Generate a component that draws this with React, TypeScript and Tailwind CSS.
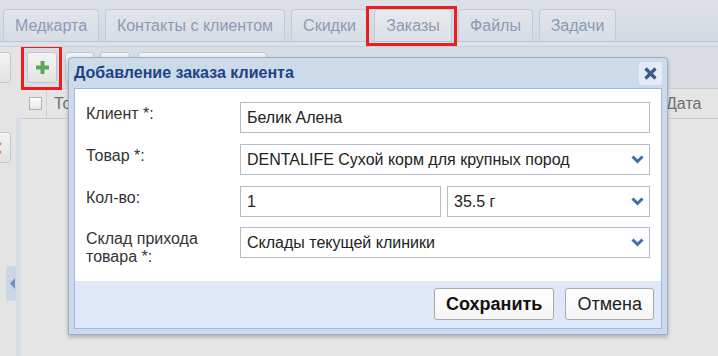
import React from "react";

const tabs = [
  { label: "Медкарта", w: "w-[96px]" },
  { label: "Контакты с клиентом", w: "w-[180px]" },
  { label: "Скидки", w: "w-[77px]" },
  { label: "Заказы", w: "w-[78px]", active: true },
  { label: "Файлы", w: "w-[75px]" },
  { label: "Задачи", w: "w-[77px]" },
];

const Chevron = () => (
  <svg width="13" height="9" viewBox="0 0 13 9" className="shrink-0">
    <path d="M1.5 1.5 L6.5 6.5 L11.5 1.5" fill="none" stroke="#3f6cae" strokeWidth="3" />
  </svg>
);

type FieldProps = { value: string; select?: boolean; className?: string };

const Field = ({ value, select, className }: FieldProps) => (
  <div
    className={
      "flex h-[31px] items-center border border-[#b5bccb] bg-white pl-[6px] pr-[5px] text-[16px] text-[#222] " +
      (className ?? "")
    }
  >
    <span className="flex-1 truncate">{value}</span>
    {select && <Chevron />}
  </div>
);

const Row = ({ label, children }: { label: React.ReactNode; children: React.ReactNode }) => (
  <div className="flex">
    <div className="w-[154px] pt-[3px] text-[16px] leading-[18px] text-[#333]">{label}</div>
    <div className="flex flex-1 gap-[6px]">{children}</div>
  </div>
);

const ToolButton = ({ className, children }: { className?: string; children?: React.ReactNode }) => (
  <div
    className={
      "flex h-[31px] items-center justify-center rounded-[3px] border border-[#c3c7cd] bg-gradient-to-b from-[#f3f3f3] to-[#e3e3e3] " +
      (className ?? "")
    }
  >
    {children}
  </div>
);

export default function App() {
  return (
    <div className="relative h-[356px] w-[718px] overflow-hidden bg-[#e4e4e4] font-['Liberation_Sans',Arial,sans-serif]">
      {/* tabs */}
      <div className="flex h-[42px] items-end gap-[6px] border-b border-[#b4c4da] bg-gradient-to-b from-[#dde1e7] to-[#d4d9e0] pl-[3px]">
        {tabs.map((t) => (
          <div
            key={t.label}
            className={
              "relative flex h-[32px] items-center justify-center rounded-t-[4px] border border-b-0 border-[#bccbdf] text-[16px] text-[#8c9bb4] " +
              t.w +
              (t.active
                ? " bg-gradient-to-b from-[#e7eaef] to-[#dde1e7]"
                : " bg-gradient-to-b from-[#e1e5eb] to-[#d8dde4]")
            }
          >
            {t.label}
            {t.active && (
              <div className="absolute -bottom-[5px] -left-[9px] -right-[6px] -top-[4px] z-10 border-[3px] border-[#ee1c1c]" />
            )}
          </div>
        ))}
      </div>
      <div className="h-[5px] border-b border-[#c6cfdc] bg-[#dde2e9]" />

      <div className="flex h-[309px]">
        {/* left panel */}
        <div className="flex w-[16px] flex-col overflow-hidden">
          <ToolButton className="-ml-[20px] mt-[5px] w-[31px] shrink-0" />
          <ToolButton className="-ml-[20px] mt-[49px] w-[31px] shrink-0">
            <svg width="14" height="14" viewBox="0 0 14 14">
              <path d="M2 2 L12 12 M12 2 L2 12" stroke="#e98a5e" strokeWidth="2.5" />
            </svg>
          </ToolButton>
        </div>
        <div className="flex w-[5px] flex-col">
          <div className="h-[71px]" />
          <div className="relative flex-1 bg-[#d6dde7]">
            <div className="absolute -left-[10px] top-[148px] flex h-[35px] w-[10px] items-center justify-end rounded-l-[4px] bg-[#ccd7e6] pr-[1px]">
              <svg width="5" height="11" viewBox="0 0 5 11">
                <path d="M5 0 L0 5.5 L5 11 Z" fill="#7290c0" />
              </svg>
            </div>
          </div>
        </div>

        {/* main */}
        <div className="flex flex-1 flex-col overflow-hidden">
          <div className="flex h-[41px] items-start gap-[8px] bg-[#d9dde3] pl-[6px] pt-[5px]">
            <div className="relative">
              <ToolButton className="w-[30px]">
                <svg width="13" height="13" viewBox="0 0 13 13">
                  <path d="M6.5 0 V13 M0 6.5 H13" stroke="#5aa95a" strokeWidth="4" />
                </svg>
              </ToolButton>
              <div className="absolute -bottom-[7px] -left-[6px] -right-[5px] -top-[7px] border-[3px] border-[#ee1c1c]" />
            </div>
            <ToolButton className="w-[29px]" />
            <ToolButton className="-ml-[2px] w-[30px]" />
            <ToolButton className="w-[129px]" />
          </div>
          <div className="flex h-[31px] items-stretch border-y border-[#c9cdd3] bg-[#e5e5e5] text-[16px] text-[#6e6e6e]">
            <div className="flex w-[26px] items-center border-r border-[#d2d2d2] pl-[8px]">
              <div className="h-[13px] w-[13px] border border-[#b2b2b2] bg-gradient-to-b from-white to-[#e6e6e6]" />
            </div>
            <div className="flex w-[40px] items-center overflow-hidden pl-[7px]">То</div>
            <div className="flex-1" />
            <div className="flex w-[54px] items-center border-l border-[#d2d2d2] pl-[1px]">Дата</div>
          </div>
          <div className="flex-1 bg-[#e5e5e5]" />
        </div>
      </div>

      {/* dialog */}
      <div className="absolute left-[68px] top-[57px] z-20 w-[600px] rounded-t-[4px] border border-[#9cb0cb] bg-[#cddaea] px-[5px] pb-[5px] shadow-[0_2px_4px_rgba(0,0,0,0.25)]">
        <div className="flex h-[30px] items-center justify-between">
          <div className="text-[16px] font-bold text-[#1b4487]">Добавление заказа клиента</div>
          <div className="flex h-[23px] w-[23px] items-center justify-center rounded-[3px] bg-[#e3ebf6]">
            <svg width="13" height="13" viewBox="0 0 13 13">
              <path d="M1.5 1.5 L11.5 11.5 M11.5 1.5 L1.5 11.5" stroke="#3b5a8b" strokeWidth="3.2" />
            </svg>
          </div>
        </div>
        <div className="border border-[#99bbe8]">
          <div className="flex h-[192px] flex-col gap-[11px] bg-white px-[11px] pt-[13px]">
            <Row label="Клиент *:">
              <Field value="Белик Алена" className="flex-1" />
            </Row>
            <Row label="Товар *:">
              <Field value="DENTALIFE Сухой корм для крупных пород" select className="flex-1" />
            </Row>
            <Row label="Кол-во:">
              <Field value="1" className="w-[201px]" />
              <Field value="35.5 г" select className="flex-1" />
            </Row>
            <div className="-mt-[1px]">
              <Row
                label={
                  <>
                    Склад прихода
                    <br />
                    товара *:
                  </>
                }
              >
                <Field value="Склады текущей клиники" select className="flex-1" />
              </Row>
            </div>
          </div>
          <div className="flex h-[47px] items-start justify-end gap-[11px] bg-[#dfe8f6] pr-[7px] pt-[7px]">
            <button className="h-[32px] rounded-[3px] border border-[#a9a9a9] bg-gradient-to-b from-white to-[#f5f5f5] px-[11px] text-[18px] font-bold text-[#111]">
              Сохранить
            </button>
            <button className="h-[32px] rounded-[3px] border border-[#a9a9a9] bg-gradient-to-b from-white to-[#f5f5f5] px-[11px] text-[18px] text-[#222]">
              Отмена
            </button>
          </div>
        </div>
      </div>
    </div>
  );
}
